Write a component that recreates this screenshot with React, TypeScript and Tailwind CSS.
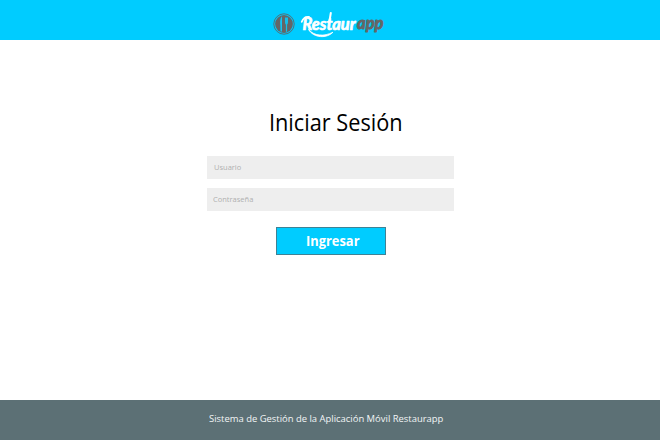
function Emblem() {
  return (
    <svg className="h-[22px] w-[22px] shrink-0" viewBox="0 0 22 22" fill="none">
      <circle cx="11" cy="11" r="10.2" stroke="#50717c" strokeWidth="1" />
      <circle cx="11" cy="11" r="8.9" fill="#646668" />
      <path d="M9 3.2C7.2 4.6 6.9 8.8 7.3 12L7.5 18.6H9Z" fill="#12c6f5" />
      <path d="M12 4.5H15V9C15 10.5 14.5 11.2 14.1 11.5V18.8H12.9V11.5C12.4 11.2 12 10.5 12 9Z" fill="#14bfeb" />
    </svg>
  );
}

function Wordmark() {
  return (
    <svg className="h-[30px] w-[86px] shrink-0" viewBox="0 0 86 30">
      <g
        fontFamily="Lato, 'Open Sans', sans-serif"
        fontWeight="700"
        fontStyle="italic"
        strokeLinejoin="round"
      >
        <text
          x="2.5"
          y="20.5"
          fill="#fff"
          stroke="#fff"
          strokeWidth="0.7"
          fontSize="16.5"
          textLength="53"
          lengthAdjust="spacingAndGlyphs"
        >
          Restaur
        </text>
        <text
          x="57"
          y="20"
          fill="#666"
          stroke="#666"
          strokeWidth="0.9"
          fontSize="16.5"
          textLength="26.5"
          lengthAdjust="spacingAndGlyphs"
        >
          app
        </text>
      </g>
      <path d="M8.5 20.5C14 27 24 27.8 33 23.2C27 29.6 14 29.4 8.5 20.5Z" fill="#fff" stroke="#fff" strokeWidth="0.8" />
      <path d="M1.8 12.8C3 9.2 6 7.6 9 7.8" fill="none" stroke="#fff" strokeWidth="1.8" strokeLinecap="round" />
      <path d="M30.8 4L29.2 14" stroke="#fff" strokeWidth="2" strokeLinecap="round" />
    </svg>
  );
}

export default function App() {
  return (
    <div className="flex h-[440px] w-[660px] flex-col bg-white font-['Open_Sans','Noto_Sans',sans-serif]">
      <header className="flex h-10 items-start bg-[#00ccff] pt-[9px] pl-[273px]">
        <div className="pt-1">
          <Emblem />
        </div>
        <div className="pl-[5px]">
          <Wordmark />
        </div>
      </header>
      <main className="flex h-[360px] flex-col pl-[207px]">
        <h1 className="mt-[66px] ml-[60px] h-8 w-fit origin-left scale-x-[0.945] pl-0.5 text-[23px] leading-8 whitespace-nowrap text-black">
          Iniciar Sesión
        </h1>
        <form className="mt-[18px] flex w-[247px] flex-col">
          <input
            type="text"
            placeholder="Usuario"
            className="h-[23px] bg-[#eeeeee] pb-[2px] pl-[7px] text-[7.5px] placeholder:text-[#b0b0b0]"
          />
          <input
            type="password"
            placeholder="Contraseña"
            className="mt-[9px] h-[23px] bg-[#eeeeee] pb-[2px] pl-[6px] text-[7.5px] placeholder:text-[#b0b0b0]"
          />
          <button
            type="button"
            className="mt-4 ml-[69px] flex h-7 w-[110px] items-center border border-[#3e8295] bg-[#00ccff] pb-px pl-[29px] text-[14px] font-bold text-white"
          >
            <span className="origin-left scale-x-[0.92]">Ingresar</span>
          </button>
        </form>
      </main>
      <footer className="flex h-10 items-center bg-[#5c7075] pl-[209px] text-[9.5px] whitespace-nowrap text-[#f2f5f5]">
        <span className="-mt-px origin-left scale-x-[0.993]">
          Sistema de Gestión de la Aplicación Móvil Restaurapp
        </span>
      </footer>
    </div>
  );
}
